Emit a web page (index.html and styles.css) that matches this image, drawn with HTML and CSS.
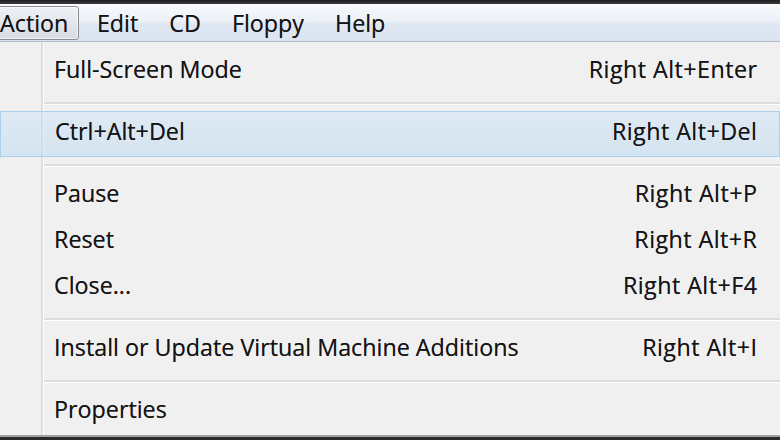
FILE: index.html
```html
<!DOCTYPE html>
<html>
<head>
<meta charset="utf-8">
<link rel="stylesheet" href="styles.css">
</head>
<body>
<div class="screen">
  <div class="topedge"></div>
  <div class="menubar">
    <div class="mb-item active">Action</div>
    <div class="mb-item">Edit</div>
    <div class="mb-item">CD</div>
    <div class="mb-item">Floppy</div>
    <div class="mb-item">Help</div>
  </div>
  <div class="dropdown">
    <div class="item"><span>Full-Screen Mode</span><span class="shortcut">Right Alt+Enter</span></div>
    <div class="sep"></div>
    <div class="item hot"><span>Ctrl+Alt+Del</span><span class="shortcut">Right Alt+Del</span></div>
    <div class="sep"></div>
    <div class="item"><span>Pause</span><span class="shortcut">Right Alt+P</span></div>
    <div class="item"><span>Reset</span><span class="shortcut">Right Alt+R</span></div>
    <div class="item"><span>Close...</span><span class="shortcut">Right Alt+F4</span></div>
    <div class="sep"></div>
    <div class="item"><span>Install or Update Virtual Machine Additions</span><span class="shortcut">Right Alt+I</span></div>
    <div class="sep"></div>
    <div class="item"><span>Properties</span><span class="shortcut"></span></div>
  </div>
  <div class="bottomedge"></div>
</div>
</body>
</html>
```
FILE: styles.css
```css
html, body {
  margin: 0;
  padding: 0;
}
body {
  width: 780px;
  height: 440px;
  overflow: hidden;
  background: #f0f0f0;
  font-family: "Open Sans", "Noto Sans", sans-serif;
  font-size: 23.3px;
  color: #141414;
  text-shadow: 0 0 0.6px rgba(20, 10, 30, 0.6);
}
.screen {
  display: flex;
  flex-direction: column;
  width: 780px;
  height: 440px;
}
.topedge {
  height: 4px;
  background: linear-gradient(#1e1e1e, #3a3a3a);
  flex: none;
}
.menubar {
  flex: none;
  height: 37px;
  border-bottom: 1px solid #b4bac4;
  background: linear-gradient(#f7f9fc 0%, #edf1f8 45%, #dfe7f3 55%, #dbe4f1 100%);
  display: flex;
  align-items: center;
  margin-left: -4px;
}
.mb-item {
  height: 34px;
  line-height: 32px;
  padding: 0 14.5px;
  box-sizing: border-box;
  border: 1px solid transparent;
}
.mb-item.active {
  padding: 0 10px 0 3px;
  margin-right: 2px;
  border: 1px solid #8a8d92;
  border-radius: 3px;
  background: linear-gradient(#eef1f5 0%, #e3e7ed 50%, #d6dbe3 100%);
  box-shadow: inset 0 0 0 1px rgba(255,255,255,0.6);
}
.dropdown {
  flex: none;
  height: 393px;
  box-sizing: border-box;
  padding-top: 7px;
  background-color: #f0f0f0;
  background-image: linear-gradient(to right, transparent 41px, #dedfdf 41px, #dedfdf 43px, #ffffff 43px, #ffffff 44px, transparent 44px);
}
.item {
  display: flex;
  justify-content: space-between;
  height: 46px;
  line-height: 40px;
  padding: 0 23px 6px 54px;
  box-sizing: border-box;
  white-space: nowrap;
}
.item.hot {
  border: 1px solid #a9d0ec;
  background: linear-gradient(rgba(200,226,247,0.45), rgba(186,216,242,0.5));
  padding: 0 22px 4px 54px;
  line-height: 39px;
}
.shortcut {
  letter-spacing: 0.45px;
  margin-right: -0.45px;
}
.sep {
  height: 16px;
  margin-left: 44px;
  box-sizing: border-box;
  padding-top: 7px;
}
.sep::before {
  content: "";
  display: block;
  height: 2px;
  background: #dcdcdc;
  border-bottom: 1px solid #ffffff;
}
.bottomedge {
  flex: none;
  height: 7px;
  border-top: 2px solid #a2a2a2;
  background: #2a2a2a;
}
```
